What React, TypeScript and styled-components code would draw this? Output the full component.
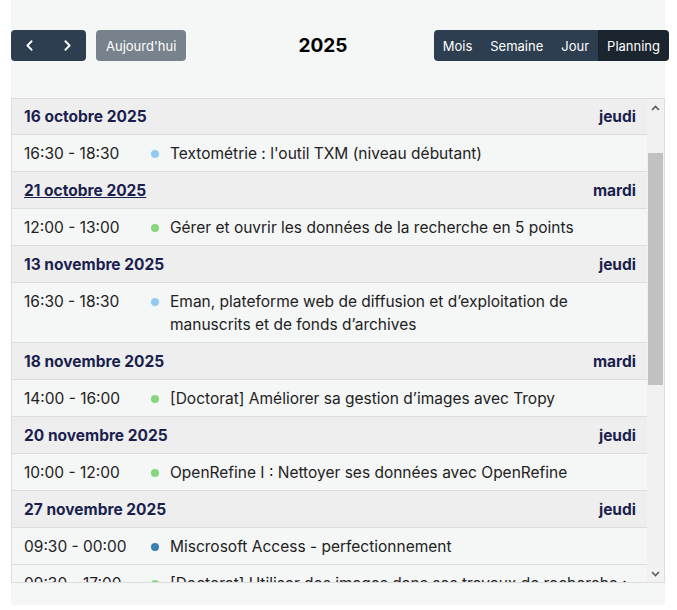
import { useLayoutEffect, useRef, useState } from "react";
import styled, { createGlobalStyle } from "styled-components";
import { ChevronLeft, ChevronRight } from "lucide-react";

const GlobalStyle = createGlobalStyle`
  html, body {
    margin: 0;
    padding: 0;
    background: #ffffff;
  }
  body {
    font-family: Inter, "Noto Sans", sans-serif;
  }
  * {
    box-sizing: border-box;
  }
`;

const Page = styled.div`
  margin-left: 11px;
  width: 654px;
  height: 605px;
  background: #f5f6f6;
  padding-top: 30px;
`;

const Toolbar = styled.div`
  display: flex;
  justify-content: space-between;
  align-items: center;
  margin-right: -4px;
  height: 31px;
  margin-bottom: 37px;
`;

const Chunk = styled.div`
  display: flex;
  align-items: center;
`;

const Group = styled.div`
  display: flex;
  border-radius: 4px;
  overflow: hidden;
`;

const Button = styled.button<{ $active?: boolean; $muted?: boolean }>`
  display: flex;
  align-items: center;
  justify-content: center;
  height: 31px;
  padding: 0 9px;
  border: none;
  font-family: Inter, sans-serif;
  font-size: 13px;
  color: #ffffff;
  background: ${(p) => (p.$active ? "#1a252f" : p.$muted ? "#78828c" : "#2c3e50")};
  cursor: pointer;
`;

const NavButton = styled(Button)`
  width: 37.5px;
  padding: 0;
`;

const TodayButton = styled(Button)`
  margin-left: 10px;
  border-radius: 4px;
  padding: 0 10px;
`;

const Title = styled.h2`
  margin: 0 0 0 26px;
  font-size: 19px;
  font-weight: 700;
  color: #000000;
`;

const ListFrame = styled.div`
  display: flex;
  height: 485px;
  border: 1px solid #dddddd;
`;

const Viewport = styled.div`
  flex: 1;
  overflow-y: auto;
  scrollbar-width: none;
  color: #222222;
  font-size: 15.5px;
  line-height: 23px;

  &::-webkit-scrollbar {
    display: none;
  }
`;

const Scrollbar = styled.div`
  flex: 0 0 17px;
  display: flex;
  flex-direction: column;
  background: #f1f1f1;
`;

const ScrollArrow = styled.div`
  flex: 0 0 17px;
  display: flex;
  align-items: center;
  justify-content: center;
`;

const Track = styled.div`
  flex: 1;
  display: flex;
  flex-direction: column;
`;

const Thumb = styled.div`
  margin: 0 1px;
  background: #c1c1c1;
`;

const DayHeader = styled.div`
  display: flex;
  justify-content: space-between;
  padding: 7px 11px 6px 12px;
  background: #eeeeee;
  border-top: 1px solid #dddddd;
  font-weight: 700;
  color: #1b1f4e;
`;

const DateLink = styled.span<{ $hover?: boolean }>`
  text-decoration: ${(p) => (p.$hover ? "underline" : "none")};
`;

const EventRow = styled.div`
  display: flex;
  align-items: flex-start;
  padding: 7px 14px 6px 12px;
  border-top: 1px solid #dddddd;
`;

const Time = styled.span`
  flex: 0 0 127px;
`;

const Dot = styled.span<{ $color: string }>`
  flex: 0 0 8px;
  height: 8px;
  margin: 8px 11px 0 0;
  border-radius: 50%;
  background: ${(p) => p.$color};
`;

const EventTitle = styled.span`
  flex: 1;
`;

const LIGHT = "#90cbf1";
const GREEN = "#85d67f";
const BLUE = "#3b7fae";

type Ev = { time: string; color: string; title: string };
type Day = { date: string; name: string; events: Ev[]; hover?: boolean };

const days: Day[] = [
  {
    date: "14 octobre 2025",
    name: "mardi",
    events: [{ time: "14:00 - 16:00", color: GREEN, title: "Zotero : gérer sa bibliographie" }],
  },
  {
    date: "16 octobre 2025",
    name: "jeudi",
    events: [{ time: "16:30 - 18:30", color: LIGHT, title: "Textométrie : l'outil TXM (niveau débutant)" }],
  },
  {
    date: "21 octobre 2025",
    name: "mardi",
    hover: true,
    events: [
      { time: "12:00 - 13:00", color: GREEN, title: "Gérer et ouvrir les données de la recherche en 5 points" },
    ],
  },
  {
    date: "13 novembre 2025",
    name: "jeudi",
    events: [
      {
        time: "16:30 - 18:30",
        color: LIGHT,
        title: "Eman, plateforme web de diffusion et d’exploitation de manuscrits et de fonds d’archives",
      },
    ],
  },
  {
    date: "18 novembre 2025",
    name: "mardi",
    events: [{ time: "14:00 - 16:00", color: GREEN, title: "[Doctorat] Améliorer sa gestion d’images avec Tropy" }],
  },
  {
    date: "20 novembre 2025",
    name: "jeudi",
    events: [{ time: "10:00 - 12:00", color: GREEN, title: "OpenRefine I : Nettoyer ses données avec OpenRefine" }],
  },
  {
    date: "27 novembre 2025",
    name: "jeudi",
    events: [
      { time: "09:30 - 00:00", color: BLUE, title: "Miscrosoft Access - perfectionnement" },
      {
        time: "09:30 - 17:00",
        color: GREEN,
        title: "[Doctorat] Utiliser des images dans ses travaux de recherche : droits et bonnes pratiques",
      },
    ],
  },
  {
    date: "2 décembre 2025",
    name: "mardi",
    events: [{ time: "14:00 - 16:00", color: GREEN, title: "OpenRefine II : Enrichir ses données" }],
  },
  {
    date: "4 décembre 2025",
    name: "jeudi",
    events: [{ time: "16:30 - 18:30", color: LIGHT, title: "Textométrie : l'outil TXM (niveau avancé)" }],
  },
  {
    date: "9 décembre 2025",
    name: "mardi",
    events: [
      { time: "12:00 - 13:00", color: GREEN, title: "Publier ses données dans un entrepôt" },
      { time: "14:00 - 16:00", color: BLUE, title: "Microsoft Excel - tableaux croisés" },
    ],
  },
  {
    date: "11 décembre 2025",
    name: "jeudi",
    events: [{ time: "10:00 - 12:00", color: GREEN, title: "[Doctorat] Rédiger son plan de gestion de données" }],
  },
];

function Arrow({ up }: { up?: boolean }) {
  return (
    <svg width="9" height="6" viewBox="0 0 9 6">
      <path
        d={up ? "M1 5 L4.5 1.5 L8 5" : "M1 1 L4.5 4.5 L8 1"}
        fill="none"
        stroke="#5a5a5a"
        strokeWidth="1.6"
      />
    </svg>
  );
}

export default function App() {
  const viewRef = useRef<HTMLDivElement>(null);
  const trackRef = useRef<HTMLDivElement>(null);
  const startRef = useRef<HTMLDivElement>(null);
  const [thumb, setThumb] = useState({ top: 0, height: 0 });

  const measure = () => {
    const view = viewRef.current;
    const track = trackRef.current;
    if (!view || !track) return;
    const h = track.clientHeight;
    setThumb({
      top: (h * view.scrollTop) / view.scrollHeight,
      height: (h * view.clientHeight) / view.scrollHeight,
    });
  };

  useLayoutEffect(() => {
    const view = viewRef.current;
    const start = startRef.current;
    if (view && start) {
      view.scrollTop = start.getBoundingClientRect().top - view.getBoundingClientRect().top + 2;
    }
    measure();
  }, []);

  return (
    <>
      <GlobalStyle />
      <Page>
        <Toolbar>
          <Chunk>
            <Group>
              <NavButton aria-label="précédent">
                <ChevronLeft size={17} strokeWidth={2.6} />
              </NavButton>
              <NavButton aria-label="suivant">
                <ChevronRight size={17} strokeWidth={2.6} />
              </NavButton>
            </Group>
            <TodayButton $muted>Aujourd'hui</TodayButton>
          </Chunk>
          <Title>2025</Title>
          <Group>
            <Button>Mois</Button>
            <Button>Semaine</Button>
            <Button>Jour</Button>
            <Button $active>Planning</Button>
          </Group>
        </Toolbar>
        <ListFrame>
          <Viewport ref={viewRef} onScroll={measure}>
            {days.map((d, i) => (
              <div key={d.date}>
                <DayHeader ref={i === 1 ? startRef : undefined}>
                  <DateLink $hover={d.hover}>{d.date}</DateLink>
                  <span>{d.name}</span>
                </DayHeader>
                {d.events.map((e) => (
                  <EventRow key={e.title}>
                    <Time>{e.time}</Time>
                    <Dot $color={e.color} />
                    <EventTitle>{e.title}</EventTitle>
                  </EventRow>
                ))}
              </div>
            ))}
          </Viewport>
          <Scrollbar>
            <ScrollArrow>
              <Arrow up />
            </ScrollArrow>
            <Track ref={trackRef}>
              <Thumb style={{ marginTop: thumb.top, height: thumb.height }} />
            </Track>
            <ScrollArrow>
              <Arrow />
            </ScrollArrow>
          </Scrollbar>
        </ListFrame>
      </Page>
    </>
  );
}
